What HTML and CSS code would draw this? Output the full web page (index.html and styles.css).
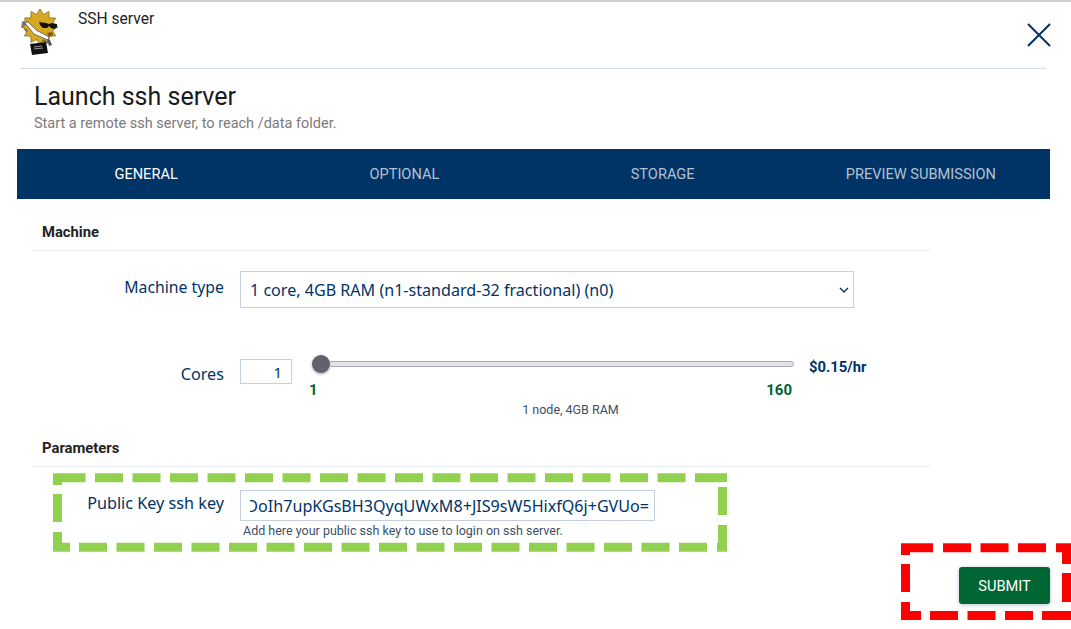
FILE: index.html
```html
<!DOCTYPE html>
<html lang="en">
<head>
    <meta charset="UTF-8">
    <meta name="viewport" content="width=device-width, initial-scale=1.0">
    <title>SSH server</title>
    <link rel="stylesheet" href="styles.css">
</head>
<body>
    <div class="page">
        <header class="app-header">
            <svg class="logo" viewBox="0 0 40 46" width="40" height="46">
                <path d="M2 13l3-2 1 4 3 5 12 9 9 3-1 3-11-3-13-10-2-4-2 1z" fill="#777"/>
                <polygon transform="translate(1 1)" fill="#d6a822" stroke="#6a5410" stroke-width=".6" points="37,17 31.6,20.4 34.6,26 28.2,26.2 28,32.6 22.4,29.6 19,35 15.6,29.6 10,32.6 9.8,26.2 3.4,26 6.4,20.4 1,17 6.4,13.6 3.4,8 9.8,7.8 10,1.4 15.6,4.4 19,-1 22.4,4.4 28,1.4 28.2,7.8 34.6,8 31.6,13.6"/>
                <path d="M5 14l3-1 8 8 13 7-1 3-14-6z" fill="#fff" stroke="#333" stroke-width=".6"/>
                <path d="M19 13l7 1 3 1 3-1 5 1 0 3-3 2-3-1-2-2-2 2-4 0-3-3z" fill="#111"/>
                <path d="M27 24l5-1 1 3-4 2z" fill="#7c5410"/>
                <path d="M27 30l3 1 2 5-3 1z" fill="#555"/>
                <path d="M10 35l16-2 2 11-16 2z" fill="#111"/>
                <path d="M14 38l8-1M14 40l9-1" stroke="#bbb" stroke-width=".8"/>
            </svg>
            <span class="app-name">SSH server</span>
            <svg class="close-icon" viewBox="0 0 24 24" width="24" height="24">
                <path d="M1 1l22 22M23 1L1 23" fill="none" stroke="#003366" stroke-width="2"/>
            </svg>
        </header>

        <div class="intro">
            <h1>Launch ssh server</h1>
            <p>Start a remote ssh server, to reach /data folder.</p>
        </div>

        <nav class="tabs">
            <span class="tab active">GENERAL</span>
            <span class="tab">OPTIONAL</span>
            <span class="tab">STORAGE</span>
            <span class="tab">PREVIEW SUBMISSION</span>
        </nav>

        <form class="form">
            <h2 class="section-title">Machine</h2>

            <div class="row row-machine">
                <label for="machine">Machine type</label>
                <div class="select-wrap">
                    <select id="machine">
                        <option>1 core, 4GB RAM (n1-standard-32 fractional) (n0)</option>
                    </select>
                    <svg class="chevron" viewBox="0 0 10 6" width="10" height="6">
                        <path d="M1 1l4 4 4-4" fill="none" stroke="#003366" stroke-width="1.4"/>
                    </svg>
                </div>
            </div>

            <div class="row row-cores">
                <label for="cores">Cores</label>
                <input type="text" id="cores" class="cores-input" value="1">
                <div class="slider">
                    <div class="track"><span class="thumb"></span></div>
                    <div class="slider-scale"><span>1</span><span>160</span></div>
                </div>
                <span class="price">$0.15/hr</span>
            </div>
            <div class="node-note">1 node, 4GB RAM</div>

            <h2 class="section-title section-params">Parameters</h2>

            <div class="row row-key">
                <label for="sshkey">Public Key ssh key</label>
                <div class="key-field">
                    <input type="text" id="sshkey" class="key-input" value="AAAAB3NzaC1yc2EAAAADAQABDoIh7upKGsBH3QyqUWxM8+JIS9sW5HixfQ6j+GVUo=&lrm;">
                    <small>Add here your public ssh key to use to login on ssh server.</small>
                </div>
            </div>

            <div class="actions">
                <button type="button" class="submit">SUBMIT</button>
            </div>
        </form>

        <!-- annotations drawn on top of the screenshot -->
        <svg class="marks" viewBox="0 0 1071 629" width="1071" height="629">
            <g class="mark-green">
                <path d="M57.5 485V477.8H85.5"/>
                <path d="M695 477.8H722.5V482"/>
                <path d="M722.5 525V547.2H717"/>
                <path d="M57.5 532V547.2H70"/>
                <path d="M57.5 494V522"/>
                <path d="M722.5 487V515"/>
                <path class="dash" d="M95 477.8H686"/>
                <path class="dash" d="M79 547.2H708"/>
            </g>
            <g class="mark-red">
                <path d="M905.5 555V547.8H933"/>
                <path d="M1056 547.8H1066.5V564"/>
                <path d="M905.5 602V615.5H921"/>
                <path d="M1042 615.5H1071"/>
                <path d="M905.5 564V592"/>
                <path d="M1066.5 573V602"/>
                <path class="dash" d="M943 547.8H1047"/>
                <path class="dash" d="M930 615.5H1034"/>
            </g>
        </svg>
    </div>
</body>
</html>
```

FILE: styles.css
```css
* {
    box-sizing: border-box;
}
html, body {
    margin: 0;
    height: 100%;
    background: #fff;
    overflow: hidden;
}
.page {
    position: relative;
    height: 629px;
    border-top: 2px solid #cfcfcf;
    font-family: Roboto, Arial, sans-serif;
    color: #222;
}
.app-header {
    display: flex;
    margin: 0 25px 0 21px;
    height: 67px;
    border-bottom: 1px solid #d5dfea;
}
.logo {
    margin: 7px 0 0 -1px;
    filter: blur(.4px);
}
.app-name {
    margin: 9px 0 0 18px;
    font-size: 15.6px;
    line-height: 17px;
}
.close-icon {
    margin: 21px -5px 0 auto;
}
.intro {
    padding: 13px 0 0 34px;
    height: 80px;
}
.intro h1 {
    margin: 0;
    font-size: 25px;
    font-weight: 400;
    line-height: 30px;
    color: #1a1a1a;
}
.intro p {
    margin: 3px 0 0;
    font-size: 14.5px;
    line-height: 17px;
    color: #7b7b7b;
}
.tabs {
    display: grid;
    grid-template-columns: repeat(4, 1fr);
    margin: 0 21px 0 17px;
    height: 50px;
    background: #003366;
    align-items: center;
    text-align: center;
    font-size: 14.6px;
}
.tab {
    color: #b3c1d1;
}
.tab.active {
    color: #fff;
}
.form {
    padding: 0 21px 0 33px;
}
.section-title {
    margin: 0;
    width: 897px;
    padding: 25px 0 9px 9px;
    font-size: 14.8px;
    line-height: 17px;
    font-weight: 700;
    color: #222;
    border-bottom: 1px solid #e8edf2;
}
.section-params {
    padding-top: 0;
    margin-top: 23px;
}
.row {
    display: flex;
}
.row label {
    width: 191px;
    text-align: right;
    font-family: "Noto Sans", Arial, sans-serif;
    font-size: 16.2px;
    color: #003366;
    flex-shrink: 0;
}
.row-machine {
    margin-top: 20px;
    height: 37px;
}
.row-machine label {
    font-size: 15.8px;
    line-height: 33px;
}
.select-wrap {
    position: relative;
    margin-left: 16px;
    width: 614px;
    height: 37px;
}
.select-wrap select {
    width: 100%;
    height: 100%;
    padding: 0 9px;
    appearance: none;
    background: #fff;
    border: 1px solid #c3d0e0;
    border-radius: 0;
    font-family: "Noto Sans", Arial, sans-serif;
    font-size: 16.1px;
    color: #003366;
}
.chevron {
    position: absolute;
    right: 5px;
    top: 16px;
}
.row-cores {
    margin-top: 51px;
    height: 40px;
}
.row-cores label {
    line-height: 30px;
}
.cores-input {
    margin-left: 16px;
    width: 52px;
    height: 25px;
    padding: 0 9px 0 0;
    text-align: right;
    border: 1px solid #c3d0e0;
    font-family: "Noto Sans", Arial, sans-serif;
    font-size: 15px;
    color: #003366;
}
.slider {
    margin-left: 21px;
    width: 481px;
}
.track {
    position: relative;
    margin: 2px 0 0 7px;
    height: 6px;
    background: #e4e4e8;
    border: 1px solid #a9a9b2;
    border-radius: 3px;
}
.thumb {
    position: absolute;
    left: -9px;
    top: -7px;
    width: 18px;
    height: 18px;
    border-radius: 50%;
    background: #62626f;
    box-shadow: 0 1px 3px rgba(0, 0, 0, .4), 0 0 0 1px #fff;
}
.slider-scale {
    display: flex;
    justify-content: space-between;
    margin: 15px 0 0 -4px;
    padding-right: 2px;
    font-size: 15px;
    line-height: 16px;
    font-weight: 700;
    color: #006633;
}
.price {
    margin: 1px 0 0 15px;
    font-size: 14.8px;
    line-height: 14px;
    font-weight: 700;
    color: #003366;
}
.node-note {
    width: 1075px;
    margin-top: 4px;
    text-align: center;
    font-size: 12.5px;
    line-height: 14px;
    color: #3d4f66;
}
.row-key {
    margin-top: 23px;
}
.row-key label {
    line-height: 26px;
}
.key-field {
    margin-left: 16px;
    width: 415px;
}
.key-input {
    display: block;
    width: 100%;
    height: 31px;
    padding: 0 5px 0 9px;
    border: 1px solid #c3d0e0;
    font-family: "Noto Sans", Arial, sans-serif;
    font-size: 16.1px;
    color: #003366;
    direction: rtl;
}
.key-field small {
    display: block;
    margin: 2px 0 0 3px;
    font-size: 12.5px;
    line-height: 15px;
    color: #3d4f66;
    white-space: nowrap;
}
.actions {
    display: flex;
    justify-content: flex-end;
    margin-top: 29px;
}
.submit {
    width: 91px;
    height: 37px;
    border: none;
    border-radius: 3px;
    background: #006633;
    color: #fff;
    font-family: Roboto, Arial, sans-serif;
    font-size: 14.6px;
    box-shadow: 0 1px 4px rgba(0, 51, 102, .3);
}
.marks {
    position: absolute;
    left: 0;
    top: -2px;
    pointer-events: none;
}
.marks path {
    fill: none;
    stroke-width: 9;
}
.marks .dash {
    stroke-dasharray: 28 9.5;
}
.mark-green path {
    stroke: #92d050;
}
.mark-red path {
    stroke: #ff0000;
}
```
